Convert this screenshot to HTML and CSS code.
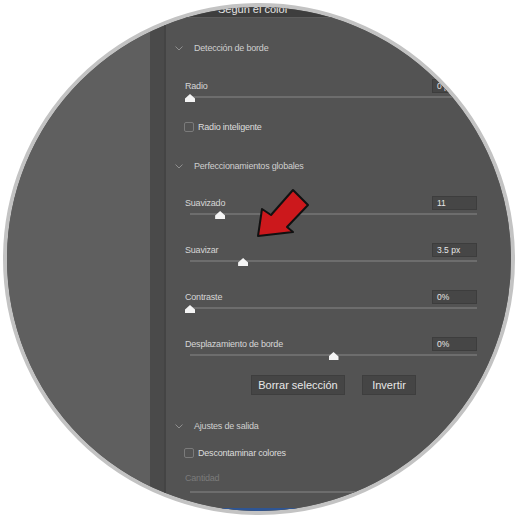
FILE: index.html
```html
<!DOCTYPE html>
<html lang="es">
<head>
  <meta charset="UTF-8" />
  <title>Seleccionar y aplicar máscara - Propiedades</title>
  <link rel="stylesheet" href="styles.css">
</head>
<body>
  <div class="lens">
    <!-- Title strip of the view mode dropdown -->
    <div class="titlebar"><span>Según el color</span></div>

    <div class="workspace">
      <div class="canvas"></div>
      <div class="dock-edge"></div>

      <div class="panel">
        <!-- Edge detection -->
        <div class="section">
          <svg viewBox="0 0 8 5"><path d="M0.5 0.5 L4 4 L7.5 0.5" /></svg>
          Detección de borde
        </div>

        <div class="slider radio-slider">
          <div class="slider-head">
            <span>Radio</span>
            <span class="value">0 px</span>
          </div>
          <div class="track"><span class="thumb" style="left: 0%"></span></div>
        </div>

        <label class="check check-first"><span class="box"></span>Radio inteligente</label>

        <!-- Global refinements -->
        <div class="section section-global">
          <svg viewBox="0 0 8 5"><path d="M0.5 0.5 L4 4 L7.5 0.5" /></svg>
          Perfeccionamientos globales
        </div>

        <div class="refine">
          <div class="slider">
            <div class="slider-head">
              <span>Suavizado</span>
              <span class="value">11</span>
            </div>
            <div class="track"><span class="thumb" style="left: 10.5%"></span></div>
          </div>

          <div class="slider">
            <div class="slider-head">
              <span>Suavizar</span>
              <span class="value">3.5 px</span>
            </div>
            <div class="track"><span class="thumb" style="left: 18.5%"></span></div>
          </div>

          <div class="slider">
            <div class="slider-head">
              <span>Contraste</span>
              <span class="value">0%</span>
            </div>
            <div class="track"><span class="thumb" style="left: 0%"></span></div>
          </div>

          <div class="slider">
            <div class="slider-head">
              <span>Desplazamiento de borde</span>
              <span class="value">0%</span>
            </div>
            <div class="track"><span class="thumb" style="left: 50%"></span></div>
          </div>
        </div>

        <div class="actions">
          <button class="btn btn-clear">Borrar selección</button>
          <button class="btn btn-invert">Invertir</button>
        </div>

        <!-- Output settings -->
        <div class="section section-output">
          <svg viewBox="0 0 8 5"><path d="M0.5 0.5 L4 4 L7.5 0.5" /></svg>
          Ajustes de salida
        </div>

        <label class="check check-output"><span class="box"></span>Descontaminar colores</label>

        <div class="slider slider-disabled">
          <div class="slider-head">
            <span>Cantidad</span>
          </div>
          <div class="track"></div>
        </div>

        <div class="output-bar"></div>
      </div>
    </div>

    <!-- Red pointer drawn over the panel -->
    <svg class="pointer" viewBox="7 7 504 504">
      <polygon points="258,236 262,209 271,215 293,190 308,205 287,227 293,232" />
    </svg>
  </div>
</body>
</html>
```

FILE: styles.css
```css
/* General */
body {
  margin: 0;
  background: #fff;
  font-family: "Liberation Sans", Arial, sans-serif;
}

/* Round magnifier frame */
.lens {
  box-sizing: border-box;
  position: relative;
  width: 512px;
  height: 512px;
  margin: 3px 0 0 3px;
  border: 4px solid #c3c3c3;
  border-radius: 50%;
  overflow: hidden;
  background: #535353;
  display: flex;
  flex-direction: column;
}

.titlebar {
  flex: none;
  height: 10px;
  background: #3e3e3e;
  border-bottom: 1px solid #5c5c5c;
}

.titlebar span {
  display: block;
  margin-top: -3px;
  padding-left: 211px;
  font-size: 11px;
  line-height: 10px;
  color: #e4e4e4;
}

.workspace {
  flex: 1;
  display: flex;
}

.canvas {
  width: 143px;
  background: #5f5f5f;
}

.dock-edge {
  width: 14px;
  background: #4a4a4a;
  border-right: 2px solid #444;
}

/* Properties panel */
.panel {
  flex: 1;
  padding-top: 24px;
  background: #535353;
}

.section {
  display: flex;
  align-items: center;
  height: 12px;
  padding-left: 9px;
  font-size: 9px;
  letter-spacing: -0.2px;
  color: #cfcfcf;
}

.section svg {
  width: 8px;
  height: 5px;
  margin-right: 11px;
}

.section path {
  fill: none;
  stroke: #8f8f8f;
  stroke-width: 1;
}

.section-global {
  margin-top: 27px;
}

.section-output {
  margin-top: 25px;
}

/* Sliders */
.slider {
  width: 292px;
  margin-left: 19px;
}

.radio-slider {
  margin-top: 25px;
}

.refine {
  margin-top: 24px;
}

.refine .slider + .slider {
  margin-top: 28px;
}

.slider-head {
  display: flex;
  justify-content: space-between;
  align-items: center;
  height: 14px;
  font-size: 9px;
  letter-spacing: -0.2px;
  color: #d6d6d6;
}

.value {
  box-sizing: border-box;
  width: 45px;
  height: 14px;
  padding-left: 4px;
  background: #464646;
  border: 1px solid #3d3d3d;
  font-size: 8.5px;
  line-height: 12px;
  letter-spacing: 0;
  color: #e6e6e6;
}

.track {
  position: relative;
  height: 2px;
  margin: 3px 0 0 5px;
  background: #6d6d6d;
}

.thumb {
  position: absolute;
  top: -2px;
  width: 10px;
  height: 8px;
  margin-left: -5px;
  background: #f4f4f4;
  clip-path: polygon(50% 0, 100% 55%, 100% 100%, 0 100%, 0 55%);
}

.slider-disabled {
  margin-top: 13px;
}

.slider-disabled .slider-head {
  height: 12px;
  color: #7b7b7b;
}

.slider-disabled .track {
  margin-top: 7px;
}

/* Checkboxes */
.check {
  display: flex;
  align-items: center;
  height: 12px;
  margin-left: 18px;
  font-size: 9px;
  letter-spacing: -0.2px;
  color: #dcdcdc;
}

.check-first {
  margin-top: 23px;
}

.check-output {
  margin-top: 15px;
}

.box {
  box-sizing: border-box;
  width: 10px;
  height: 10px;
  margin-right: 4px;
  border: 1px solid #7b7b7b;
  border-radius: 2px;
}

/* Buttons */
.actions {
  display: flex;
  gap: 17px;
  margin-top: 19px;
  padding-left: 85px;
}

.btn {
  box-sizing: border-box;
  height: 20px;
  padding: 0;
  background: #454545;
  border: 1px solid #3e3e3e;
  font-family: "Liberation Sans", Arial, sans-serif;
  font-size: 11px;
  color: #e8e8e8;
}

.btn-clear {
  width: 94px;
}

.btn-invert {
  width: 54px;
}

.output-bar {
  width: 83px;
  height: 10px;
  margin: 15px 0 0 56px;
  background: #2e5594;
}

/* Red arrow on top */
.pointer {
  position: absolute;
  left: 0;
  top: 0;
  width: 504px;
  height: 504px;
}

.pointer polygon {
  fill: #cc181c;
  stroke: #111;
  stroke-width: 2;
  stroke-linejoin: round;
}
```
